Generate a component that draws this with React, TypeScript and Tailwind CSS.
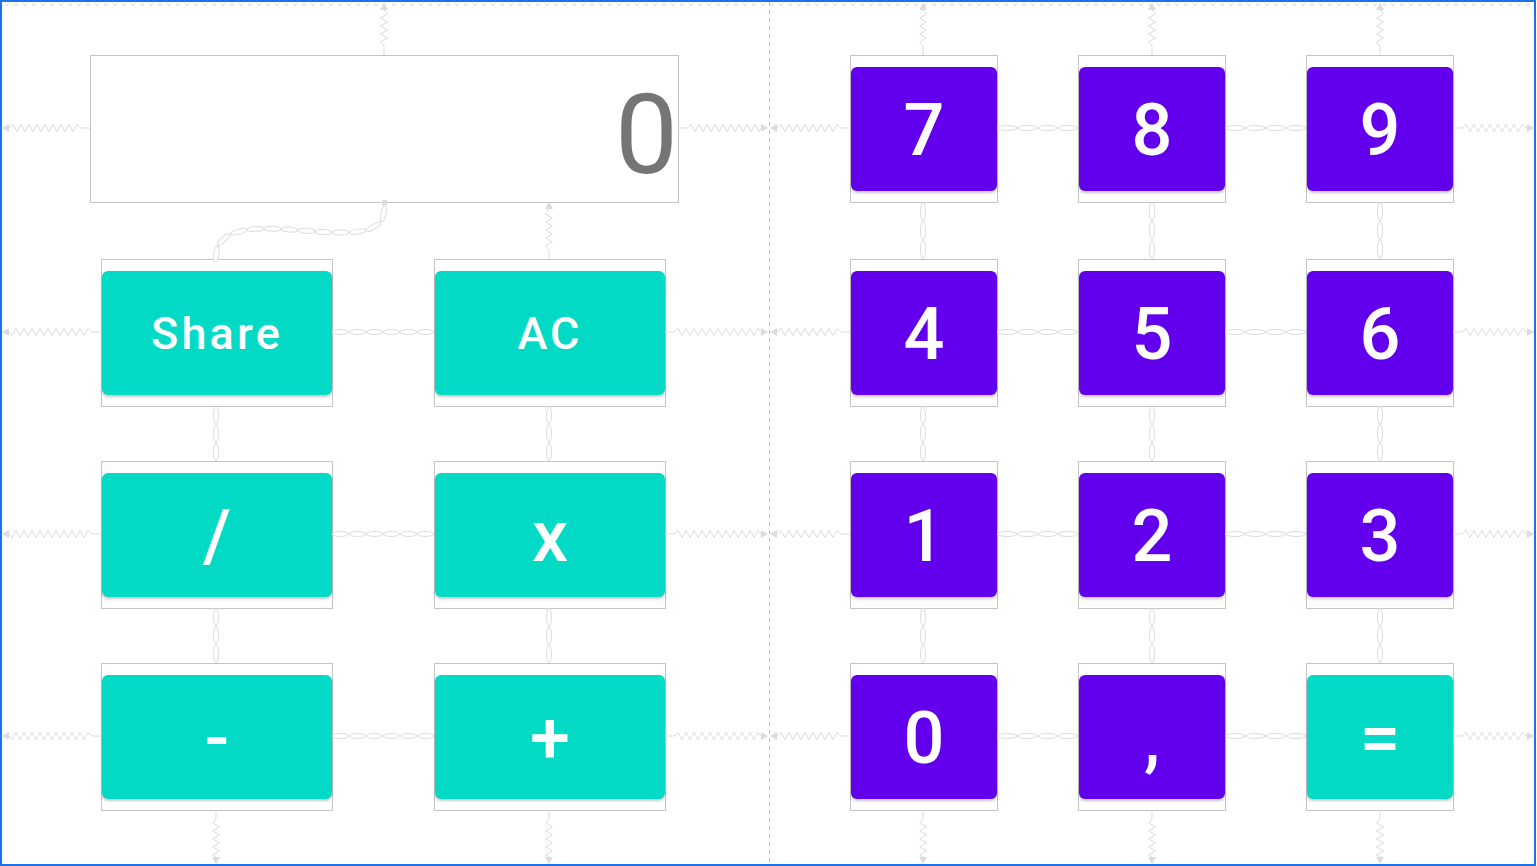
import type { ReactNode } from "react";

const LINE = "#dcdcdc";

type Key = { label: string; kind: "op" | "num"; size?: "sm" | "lg" };

const leftKeys: Key[] = [
  { label: "Share", kind: "op", size: "sm" },
  { label: "AC", kind: "op", size: "sm" },
  { label: "/", kind: "op" },
  { label: "x", kind: "op" },
  { label: "-", kind: "op" },
  { label: "+", kind: "op" },
];

const rightKeys: Key[] = [
  { label: "7", kind: "num" },
  { label: "8", kind: "num" },
  { label: "9", kind: "num" },
  { label: "4", kind: "num" },
  { label: "5", kind: "num" },
  { label: "6", kind: "num" },
  { label: "1", kind: "num" },
  { label: "2", kind: "num" },
  { label: "3", kind: "num" },
  { label: "0", kind: "num" },
  { label: ",", kind: "num" },
  { label: "=", kind: "op" },
];

function KeyBox({ k }: { k: Key }) {
  const bg = k.kind === "op" ? "bg-[#03dac5]" : "bg-[#6200ee]";
  const text =
    k.size === "sm"
      ? "text-[45px] tracking-[0.07em]"
      : "text-[72px] pt-[3px]";
  return (
    <div className="flex h-[148px] flex-col border border-[#c4c4c4] pt-[11px] pb-[11px]">
      <div
        className={`flex flex-1 items-center justify-center rounded-[6px] font-medium leading-none text-white shadow-[0_2px_3px_rgba(0,0,0,0.22)] ${bg} ${text}`}
      >
        {k.label}
      </div>
    </div>
  );
}

// spring drawn from a widget side (b) to an anchor (t), arrow at the anchor
function spring(bx: number, by: number, tx: number, ty: number, key: string) {
  const horiz = by === ty;
  const len = horiz ? tx - bx : ty - by;
  const dir = Math.sign(len);
  const total = Math.abs(len);
  const lead = 9;
  const arrow = 7;
  const amp = 3.5;
  const step = 4;
  const P = (a: number, o: number) =>
    horiz ? `${bx + dir * a},${by + o}` : `${bx + o},${by + dir * a}`;
  const end = total - arrow;
  let d = `M${P(0, 0)} L${P(lead, 0)}`;
  let a = lead;
  let k = 0;
  while (a + step <= end - 2) {
    a += step;
    k++;
    d += ` L${P(a, k % 2 ? -amp : amp)}`;
  }
  d += ` L${P(end, 0)}`;
  const tri = `M${P(total, 0)} L${P(end, -4)} L${P(end, 4)} Z`;
  return (
    <g key={key}>
      <path d={d} fill="none" stroke={LINE} strokeWidth="1" />
      <path d={tri} fill={LINE} />
    </g>
  );
}

function chain(x1: number, y1: number, x2: number, y2: number, key: string) {
  const horiz = y1 === y2;
  const len = horiz ? x2 - x1 : y2 - y1;
  const links: ReactNode[] = [];
  const n = Math.max(1, Math.floor(len / 17));
  const pitch = len / n;
  for (let i = 0; i < n; i++) {
    const c = (horiz ? x1 : y1) + pitch * (i + 0.5);
    links.push(
      <ellipse
        key={i}
        cx={horiz ? c : x1}
        cy={horiz ? y1 : c}
        rx={horiz ? pitch / 2 - 0.5 : 2.5}
        ry={horiz ? 2.5 : pitch / 2 - 0.5}
        fill="white"
        stroke={LINE}
        strokeWidth="1"
      />
    );
  }
  return (
    <g key={key}>
      <line x1={x1} y1={y1} x2={x2} y2={y2} stroke={LINE} strokeWidth="1" />
      {links}
    </g>
  );
}

function curvedChain() {
  const p0 = [384, 205];
  const p1 = [390, 270];
  const p2 = [216, 190];
  const p3 = [216, 259];
  const at = (t: number) => {
    const u = 1 - t;
    return [0, 1].map(
      (i) =>
        u * u * u * p0[i] +
        3 * u * u * t * p1[i] +
        3 * u * t * t * p2[i] +
        t * t * t * p3[i]
    );
  };
  const pts: number[][] = [];
  for (let i = 0; i <= 400; i++) pts.push(at(i / 400));
  const links: ReactNode[] = [];
  let acc = 0;
  let next = 8.5;
  for (let i = 1; i < pts.length; i++) {
    const dx = pts[i][0] - pts[i - 1][0];
    const dy = pts[i][1] - pts[i - 1][1];
    acc += Math.hypot(dx, dy);
    if (acc >= next) {
      const ang = (Math.atan2(dy, dx) * 180) / Math.PI;
      links.push(
        <ellipse
          key={i}
          cx={pts[i][0]}
          cy={pts[i][1]}
          rx="8"
          ry="2.5"
          transform={`rotate(${ang} ${pts[i][0]} ${pts[i][1]})`}
          fill="white"
          stroke={LINE}
          strokeWidth="1"
        />
      );
      next += 17;
    }
  }
  const d = `M${p0.join(",")} C${p1.join(",")} ${p2.join(",")} ${p3.join(",")}`;
  return (
    <g key="curve">
      <rect x="382" y="200" width="5" height="5" fill={LINE} />
      <path d={d} fill="none" stroke={LINE} strokeWidth="1" />
      {links}
    </g>
  );
}

function Constraints() {
  const items: ReactNode[] = [];
  const rowsL = [332, 534, 736];
  const rowsR = [128, 332, 534, 736];
  // display
  items.push(spring(90, 128, 2, 128, "d-l"));
  items.push(spring(678, 128, 768, 128, "d-r"));
  items.push(spring(384, 55, 384, 3, "d-t"));
  items.push(spring(549, 259, 549, 202, "ac-t"));
  items.push(curvedChain());
  // left keypad
  rowsL.forEach((y, i) => {
    items.push(spring(101, y, 2, y, `l-l${i}`));
    items.push(chain(332, y, 434, y, `l-c${i}`));
    items.push(spring(665, y, 768, y, `l-r${i}`));
  });
  [216, 549].forEach((x) => {
    items.push(chain(x, 406, x, 461, `lv1-${x}`));
    items.push(chain(x, 608, x, 663, `lv2-${x}`));
    items.push(spring(x, 810, x, 864, `lb-${x}`));
  });
  // right keypad
  rowsR.forEach((y, i) => {
    items.push(spring(850, y, 770, y, `r-l${i}`));
    items.push(chain(997, y, 1078, y, `r-c1${i}`));
    items.push(chain(1225, y, 1306, y, `r-c2${i}`));
    items.push(spring(1453, y, 1534, y, `r-r${i}`));
  });
  [923, 1152, 1380].forEach((x) => {
    items.push(spring(x, 55, x, 3, `rt-${x}`));
    items.push(chain(x, 202, x, 259, `rv0-${x}`));
    items.push(chain(x, 406, x, 461, `rv1-${x}`));
    items.push(chain(x, 608, x, 663, `rv2-${x}`));
    items.push(spring(x, 810, x, 864, `rb-${x}`));
  });
  let top = "";
  for (let x = 5; x < 1530; x += 9) top += `M${x},3 l2,3 l2,-3 `;
  return (
    <svg
      className="pointer-events-none absolute inset-0"
      width="1537"
      height="866"
      viewBox="0 0 1537 866"
    >
      <path d={top} fill="none" stroke={LINE} strokeWidth="1" />
      <line
        x1="769.5"
        y1="2"
        x2="769.5"
        y2="864"
        stroke="#bdbdbd"
        strokeWidth="1"
        strokeDasharray="4 4"
      />
      {items}
    </svg>
  );
}

export default function App() {
  return (
    <div className="relative h-[866px] w-[1537px] overflow-hidden bg-white font-['Roboto','Liberation_Sans',sans-serif]">
      <div className="flex h-[866px] w-[1536px] border-2 border-[#1a73e8]">
        {/* Display + operators */}
        <section className="w-[767px] pl-[88px] pt-[53px]">
          <div className="flex h-[148px] w-[589px] items-center justify-end border border-[#c4c4c4] pt-[11px] text-[112px] leading-none text-[#757575]">
            0
          </div>
          <div className="mt-[56px] ml-[11px] grid grid-cols-[232px_232px] gap-x-[101px] gap-y-[54px]">
            {leftKeys.map((k) => (
              <KeyBox key={k.label} k={k} />
            ))}
          </div>
        </section>

        {/* Number pad */}
        <section className="flex-1 pl-[81px] pt-[53px]">
          <div className="grid grid-cols-[148px_148px_148px] grid-rows-[150px_148px_148px_148px] gap-x-[80px] gap-y-[54px]">
            {rightKeys.map((k) => (
              <KeyBox key={k.label} k={k} />
            ))}
          </div>
        </section>
      </div>
      <Constraints />
    </div>
  );
}
